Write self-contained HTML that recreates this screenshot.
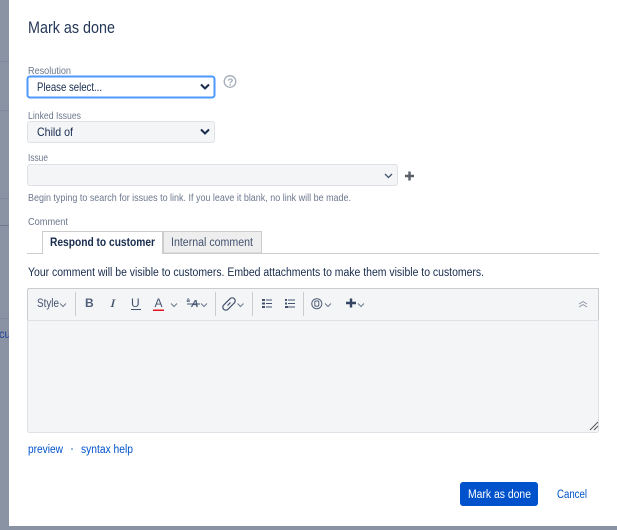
<!DOCTYPE html>
<html lang="en">
<head>
<meta charset="utf-8">
<title>Mark as done</title>
<style>
html,body{margin:0;padding:0;width:617px;height:530px;overflow:hidden;background:#fff}
svg{display:block}
text{font-family:"Liberation Sans",sans-serif;fill:#172b4d}
.l{font-size:10.5px;fill:#6b778c}
.b{font-size:12px}
</style>
</head>
<body>
<svg width="617" height="530" viewBox="0 0 617 530" xmlns="http://www.w3.org/2000/svg">
<rect width="617" height="530" fill="#8993a4"/>
<g fill="#7f899b">
<rect x="0" y="61" width="9" height="1"/><rect x="0" y="110" width="9" height="1"/><rect x="0" y="198" width="9" height="1"/><rect x="0" y="225" width="9" height="1" fill="#6f798b"/><rect x="0" y="318" width="9" height="1"/>
</g>
<text x="-1" y="338" font-size="12" style="fill:#1f3f9e" textLength="17" lengthAdjust="spacingAndGlyphs">cus</text>
<rect x="9" y="0" width="608" height="526" fill="#fff"/>

<text x="28" y="33" font-size="16.500" style="fill:#253858" textLength="87" lengthAdjust="spacingAndGlyphs">Mark as done</text>

<text class="l" x="28" y="74" textLength="43" lengthAdjust="spacingAndGlyphs">Resolution</text>
<rect x="27.500" y="76.500" width="187" height="21" rx="2.500" fill="#fff" stroke="#4c9aff" stroke-width="2"/>
<text class="b" x="37" y="91" textLength="65" lengthAdjust="spacingAndGlyphs">Please select...</text>
<path d="M201 84.500l4 4 4-4" fill="none" stroke="#172b4d" stroke-width="2"/>
<circle cx="230" cy="81.500" r="5.800" fill="none" stroke="#a5adba" stroke-width="1.300"/>
<text x="227.200" y="85.300" font-size="10" font-weight="bold" style="fill:#a5adba">?</text>

<text class="l" x="28" y="119" textLength="53" lengthAdjust="spacingAndGlyphs">Linked Issues</text>
<rect x="27.500" y="121.500" width="187" height="21" rx="2.500" fill="#f4f5f7" stroke="#dfe1e6"/>
<text class="b" x="37" y="136" textLength="36" lengthAdjust="spacingAndGlyphs">Child of</text>
<path d="M201 129.500l4 4 4-4" fill="none" stroke="#172b4d" stroke-width="2"/>

<text class="l" x="28" y="161" textLength="20" lengthAdjust="spacingAndGlyphs">Issue</text>
<rect x="27.500" y="164.500" width="370" height="21" rx="2.500" fill="#f4f5f7" stroke="#dfe1e6"/>
<path d="M385 174l3.500 3.500 3.500-3.500" fill="none" stroke="#42526e" stroke-width="1.300"/>
<path d="M409.500 171.500v9M405 176h9" fill="none" stroke="#5a5f69" stroke-width="2.400"/>
<text x="28" y="201" font-size="10.500" style="fill:#6b778c" textLength="323" lengthAdjust="spacingAndGlyphs">Begin typing to search for issues to link. If you leave it blank, no link will be made.</text>

<text class="l" x="28" y="225" textLength="40" lengthAdjust="spacingAndGlyphs">Comment</text>
<rect x="27" y="253" width="572" height="1" fill="#ccc"/>
<path d="M42.500 253.500V231.500H162.500V253.500" fill="#fff" stroke="#ccc"/>
<rect x="43" y="252" width="119" height="2" fill="#fff"/>
<rect x="163.500" y="231.500" width="98" height="21.500" fill="#eee" stroke="#ccc"/>
<text x="50" y="246" font-size="11.500" font-weight="bold" textLength="105" lengthAdjust="spacingAndGlyphs">Respond to customer</text>
<text x="171" y="246" font-size="11.500" style="fill:#42526e" textLength="82" lengthAdjust="spacingAndGlyphs">Internal comment</text>

<text x="28" y="276" font-size="11.500" textLength="456" lengthAdjust="spacingAndGlyphs">Your comment will be visible to customers. Embed attachments to make them visible to customers.</text>

<rect x="27.500" y="288.500" width="571" height="144" rx="2" fill="#f4f5f7" stroke="#dfe1e6"/>
<path d="M28 288.500H598.500V320" fill="none" stroke="#ccc"/>
<path d="M27.500 320V290.500Q27.500 288.500 29.500 288.500" fill="none" stroke="#ccc"/>
<rect x="28" y="320" width="570" height="1" fill="#dfe1e6"/>

<g>
<text x="37" y="307" font-size="11.500" style="fill:#42526e" textLength="22" lengthAdjust="spacingAndGlyphs">Style</text>
<path d="M60 303.500l3 3 3-3" fill="none" stroke="#6b778c" stroke-width="1"/>
<rect x="75" y="292" width="1" height="24" fill="#ccc"/>
<text x="85" y="307" font-size="12" font-weight="bold" style="fill:#505f79">B</text>
<text x="110" y="307" font-size="12" font-style="italic" style="fill:#42526e;font-family:'Liberation Serif',serif" textLength="5.500" lengthAdjust="spacingAndGlyphs">I</text>
<text x="131" y="307" font-size="12" style="fill:#42526e">U</text>
<rect x="131" y="309" width="10" height="1" fill="#42526e"/>
<text x="154.500" y="307" font-size="12" style="fill:#42526e">A</text>
<rect x="153" y="309.500" width="11" height="1.500" fill="#e5131c"/>
<path d="M171 303.500l3 3 3-3" fill="none" stroke="#6b778c" stroke-width="1"/>
<text x="186.500" y="302" font-size="6" font-weight="bold" style="fill:#42526e">a</text>
<text x="191" y="307" font-size="10.500" font-weight="bold" font-style="italic" style="fill:#505f79">A</text>
<rect x="187" y="303.500" width="13" height="1" fill="#42526e"/>
<path d="M201 303.500l3 3 3-3" fill="none" stroke="#6b778c" stroke-width="1"/>
<rect x="215" y="292" width="1" height="24" fill="#ccc"/>
<g fill="none" stroke="#42526e" stroke-width="1.200">
<rect x="221.500" y="301" width="15" height="6" rx="3" transform="rotate(-45 229 304)"/>
<path d="M227.500 305.500l3-3"/>
</g>
<path d="M237.500 303.500l3 3 3-3" fill="none" stroke="#6b778c" stroke-width="1"/>
<rect x="252" y="292" width="1" height="24" fill="#ccc"/>
<g fill="#42526e">
<rect x="262" y="299" width="3" height="2"/><rect x="262" y="302.500" width="3" height="2"/><rect x="262" y="306" width="3" height="2"/>
<rect x="266" y="299.500" width="6" height="1"/><rect x="266" y="303" width="6" height="1"/><rect x="266" y="306.500" width="6" height="1"/>
<rect x="285" y="299" width="2" height="2"/><rect x="285" y="302.500" width="2" height="2"/><rect x="285" y="306" width="3" height="2"/>
<rect x="288" y="299.500" width="7" height="1"/><rect x="288" y="303" width="7" height="1"/><rect x="288" y="306.500" width="7" height="1"/>
</g>
<rect x="303" y="292" width="1" height="24" fill="#ccc"/>
<circle cx="316.800" cy="303.700" r="5" fill="none" stroke="#505f79" stroke-width="1"/>
<rect x="314.800" y="301" width="4" height="5.200" rx="1.200" fill="none" stroke="#505f79" stroke-width="1"/>
<path d="M325 303.500l3 3 3-3" fill="none" stroke="#6b778c" stroke-width="1"/>
<path d="M351 298.500v9M346 303h10" fill="none" stroke="#344563" stroke-width="2.400"/>
<path d="M358 303.500l3 3 3-3" fill="none" stroke="#6b778c" stroke-width="1"/>
<path d="M579 304l4-2.500 4 2.500M579 307l4-2.500 4 2.500" fill="none" stroke="#8a93a3" stroke-width="0.900"/>
</g>
<path d="M590 430l8-8M594 430l4-4" fill="none" stroke="#555" stroke-width="1"/>

<text x="28" y="453" font-size="11.500" style="fill:#0052cc" textLength="35" lengthAdjust="spacingAndGlyphs">preview</text>
<circle cx="72" cy="449" r="1" fill="#7a9fd6"/>
<text x="81" y="453" font-size="11.500" style="fill:#0052cc" textLength="52" lengthAdjust="spacingAndGlyphs">syntax help</text>

<rect x="460" y="482" width="78" height="24" rx="3" fill="#0052cc"/>
<text x="468" y="498" font-size="11.500" style="fill:#fff" textLength="63" lengthAdjust="spacingAndGlyphs">Mark as done</text>
<text x="557" y="498" font-size="11.500" style="fill:#0052cc" textLength="30" lengthAdjust="spacingAndGlyphs">Cancel</text>
</svg>
</body>
</html>
